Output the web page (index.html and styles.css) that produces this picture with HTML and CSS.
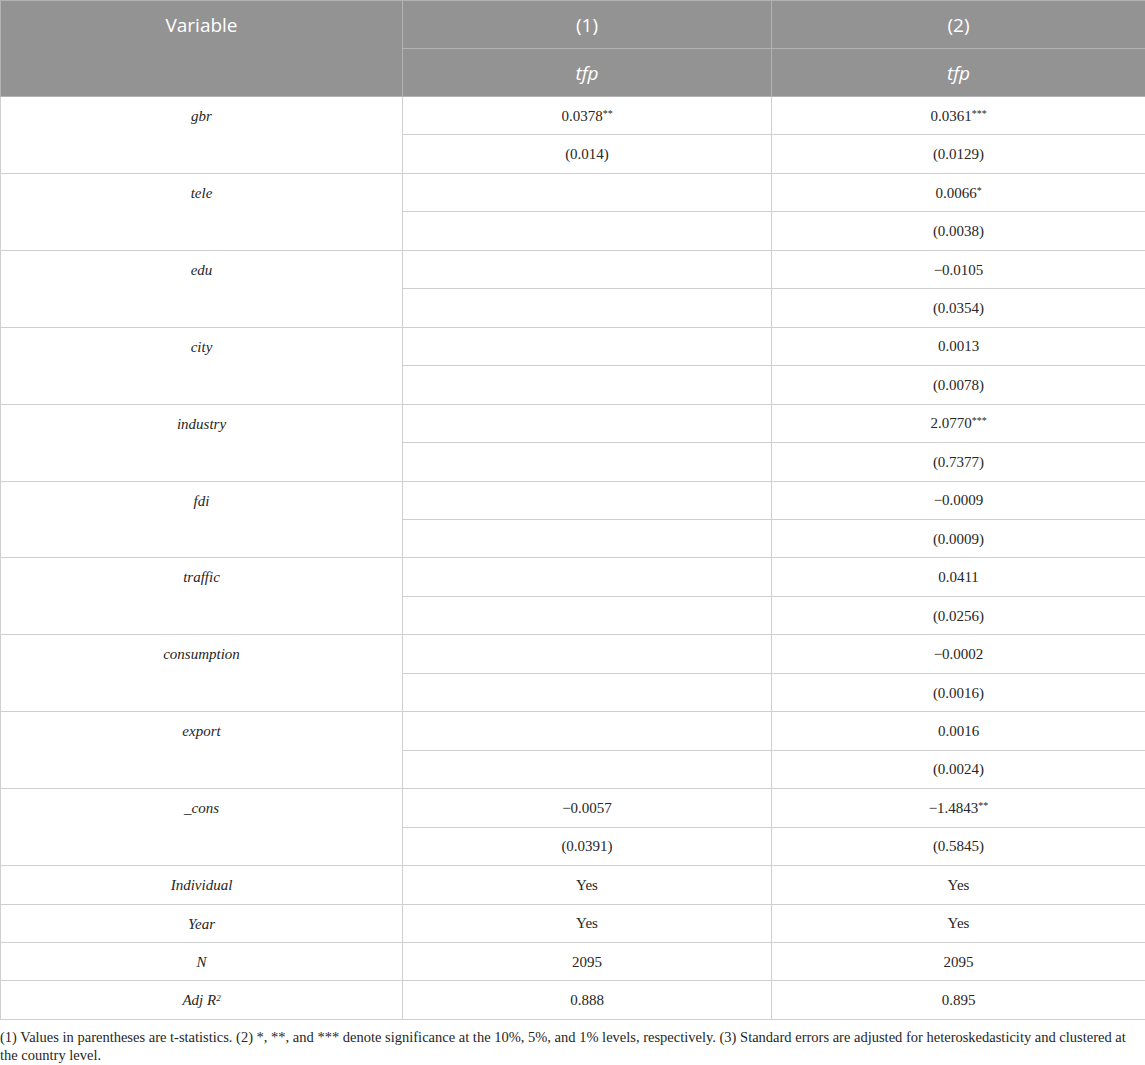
FILE: index.html
```html
<!DOCTYPE html>
<html>
<head>
<meta charset="utf-8">
<link rel="stylesheet" href="styles.css">
</head>
<body>
<div class="wrap">
<table class="tbl">
  <colgroup>
    <col class="c1"><col class="c2"><col class="c3">
  </colgroup>
  <thead>
    <tr class="h1">
      <th rowspan="2" class="hvar">Variable</th>
      <th>(1)</th>
      <th>(2)</th>
    </tr>
    <tr class="h2">
      <th><i>tfp</i></th>
      <th><i>tfp</i></th>
    </tr>
  </thead>
  <tbody>
    <tr><td rowspan="2" class="var"><i>gbr</i></td><td>0.0378<sup>**</sup></td><td>0.0361<sup>***</sup></td></tr>
    <tr><td>(0.014)</td><td>(0.0129)</td></tr>
    <tr><td rowspan="2" class="var"><i>tele</i></td><td></td><td>0.0066<sup>*</sup></td></tr>
    <tr><td></td><td>(0.0038)</td></tr>
    <tr><td rowspan="2" class="var"><i>edu</i></td><td></td><td>−0.0105</td></tr>
    <tr><td></td><td>(0.0354)</td></tr>
    <tr><td rowspan="2" class="var"><i>city</i></td><td></td><td>0.0013</td></tr>
    <tr><td></td><td>(0.0078)</td></tr>
    <tr><td rowspan="2" class="var"><i>industry</i></td><td></td><td>2.0770<sup>***</sup></td></tr>
    <tr><td></td><td>(0.7377)</td></tr>
    <tr><td rowspan="2" class="var"><i>fdi</i></td><td></td><td>−0.0009</td></tr>
    <tr><td></td><td>(0.0009)</td></tr>
    <tr><td rowspan="2" class="var"><i>traffic</i></td><td></td><td>0.0411</td></tr>
    <tr><td></td><td>(0.0256)</td></tr>
    <tr><td rowspan="2" class="var"><i>consumption</i></td><td></td><td>−0.0002</td></tr>
    <tr><td></td><td>(0.0016)</td></tr>
    <tr><td rowspan="2" class="var"><i>export</i></td><td></td><td>0.0016</td></tr>
    <tr><td></td><td>(0.0024)</td></tr>
    <tr><td rowspan="2" class="var"><i>_cons</i></td><td>−0.0057</td><td>−1.4843<sup>**</sup></td></tr>
    <tr><td>(0.0391)</td><td>(0.5845)</td></tr>
    <tr><td class="var"><i>Individual</i></td><td>Yes</td><td>Yes</td></tr>
    <tr><td class="var"><i>Year</i></td><td>Yes</td><td>Yes</td></tr>
    <tr><td class="var"><i>N</i></td><td>2095</td><td>2095</td></tr>
    <tr><td class="var"><i>Adj R<sup class="sq">2</sup></i></td><td>0.888</td><td>0.895</td></tr>
  </tbody>
</table>
<p class="note">(1) Values in parentheses are t-statistics. (2) *, **, and *** denote significance at the 10%, 5%, and 1% levels, respectively. (3) Standard errors are adjusted for heteroskedasticity and clustered at the country level.</p>
</div>
</body>
</html>
```
FILE: styles.css
```css
html, body {
  margin: 0;
  padding: 0;
  background: #fff;
}
.wrap {
  width: 1145px;
}
.tbl {
  width: 1145px;
  border-collapse: collapse;
  table-layout: fixed;
  font-family: "Liberation Serif", "Times New Roman", serif;
  font-size: 15px;
  color: #262626;
}
.c1 { width: 402px; }
.c2 { width: 369px; }
.c3 { width: 374px; }
.tbl th {
  background: #939393;
  color: #fff;
  font-family: "Open Sans", "Noto Sans", sans-serif;
  font-weight: 400;
  font-size: 19px;
  height: 47px;
  padding: 0 8px;
  border: 1px solid #b3b3b3;
  text-align: center;
  vertical-align: middle;
  line-height: 24px;
}
.tbl th.hvar {
  vertical-align: top;
  padding-top: 12px;
}
.tbl td {
  border: 1px solid #cfcfcf;
  text-align: center;
  vertical-align: middle;
  height: 38.46px;
  padding: 0 8px;
  line-height: 20px;
  box-sizing: border-box;
}
.tbl td.var {
  vertical-align: top;
  padding-top: 9px;
}
.tbl sup {
  font-size: 10px;
  line-height: 0;
  vertical-align: 4px;
}
.tbl sup.sq {
  font-size: 9px;
}
.note {
  margin: 8px 0 0 0;
  font-family: "Liberation Serif", "Times New Roman", serif;
  font-size: 14.5px;
  line-height: 18px;
  color: #262626;
}
```
